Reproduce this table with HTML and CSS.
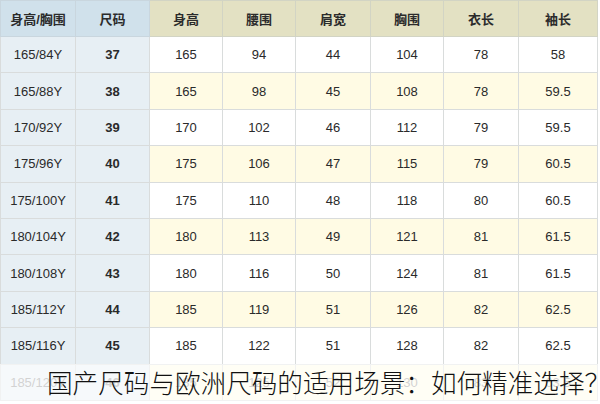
FILE: index.html
```html
<!DOCTYPE html>
<html lang="zh">
<head>
<meta charset="utf-8">
<link rel="stylesheet" href="styles.css">
</head>
<body>
<div class="page">
  <table class="size-table">
    <colgroup>
      <col class="c1"><col class="c2"><col class="c3"><col class="c4"><col class="c5"><col class="c6"><col class="c7"><col class="c8">
    </colgroup>
    <thead>
      <tr>
        <th class="key">身高/胸围</th><th class="key">尺码</th><th>身高</th><th>腰围</th><th>肩宽</th><th>胸围</th><th>衣长</th><th>袖长</th>
      </tr>
    </thead>
    <tbody>
      <tr><td class="key">165/84Y</td><td class="key b">37</td><td>165</td><td>94</td><td>44</td><td>104</td><td>78</td><td>58</td></tr>
      <tr class="alt"><td class="key">165/88Y</td><td class="key b">38</td><td>165</td><td>98</td><td>45</td><td>108</td><td>78</td><td>59.5</td></tr>
      <tr><td class="key">170/92Y</td><td class="key b">39</td><td>170</td><td>102</td><td>46</td><td>112</td><td>79</td><td>59.5</td></tr>
      <tr class="alt"><td class="key">175/96Y</td><td class="key b">40</td><td>175</td><td>106</td><td>47</td><td>115</td><td>79</td><td>60.5</td></tr>
      <tr><td class="key">175/100Y</td><td class="key b">41</td><td>175</td><td>110</td><td>48</td><td>118</td><td>80</td><td>60.5</td></tr>
      <tr class="alt"><td class="key">180/104Y</td><td class="key b">42</td><td>180</td><td>113</td><td>49</td><td>121</td><td>81</td><td>61.5</td></tr>
      <tr><td class="key">180/108Y</td><td class="key b">43</td><td>180</td><td>116</td><td>50</td><td>124</td><td>81</td><td>61.5</td></tr>
      <tr class="alt"><td class="key">185/112Y</td><td class="key b">44</td><td>185</td><td>119</td><td>51</td><td>126</td><td>82</td><td>62.5</td></tr>
      <tr><td class="key">185/116Y</td><td class="key b">45</td><td>185</td><td>122</td><td>51</td><td>128</td><td>82</td><td>62.5</td></tr>
      <tr class="alt faded"><td class="key">185/120Y</td><td class="key b">46</td><td>185</td><td>125</td><td>52</td><td>130</td><td>83</td><td>63.5</td></tr>
    </tbody>
  </table>
  <div class="caption">国产尺码与欧洲尺码的适用场景：如何精准选择？</div>
</div>
</body>
</html>
```
FILE: styles.css
```css
html, body {
  margin: 0;
  padding: 0;
  background: #ffffff;
}
.page {
  position: relative;
  width: 600px;
  height: 404px;
  overflow: hidden;
  font-family: "Liberation Sans", "Noto Sans CJK SC", sans-serif;
}
.size-table {
  border-collapse: collapse;
  table-layout: fixed;
  width: 597px;
  font-size: 13px;
  color: #2a2a2a;
}
.c1 { width: 75px; }
.c2 { width: 74px; }
.c3 { width: 73px; }
.c4 { width: 73px; }
.c5 { width: 75px; }
.c6 { width: 73px; }
.c7 { width: 75px; }
.c8 { width: 79px; }
.size-table th,
.size-table td {
  border: 1px solid #d9dcdc;
  text-align: center;
  padding: 0;
}
.size-table thead th {
  height: 35px;
  font-weight: bold;
  background: #e3e1c3;
  color: #2b2b2b;
  border-color: #d2d4c4;
}
.size-table thead th.key {
  background: #d0e1eb;
  border-color: #c9d6de;
}
.size-table tbody td {
  height: 35.4px;
  background: #ffffff;
}
.size-table tbody tr.alt td {
  background: #fffbe4;
}
.size-table tbody td.key,
.size-table tbody tr.alt td.key {
  background: #e7eff4;
}
.size-table td.b {
  font-weight: bold;
}
.size-table tbody tr.faded td {
  color: #8a8a8a;
}
.caption {
  position: absolute;
  left: 0;
  right: 0;
  top: 364px;
  bottom: 0;
  padding-left: 47px;
  background: rgba(255, 255, 255, 0.62);
  font-family: "Noto Sans CJK SC", sans-serif;
  font-size: 25.6px;
  font-weight: 300;
  line-height: 36px;
  color: #111111;
  white-space: nowrap;
}
```
